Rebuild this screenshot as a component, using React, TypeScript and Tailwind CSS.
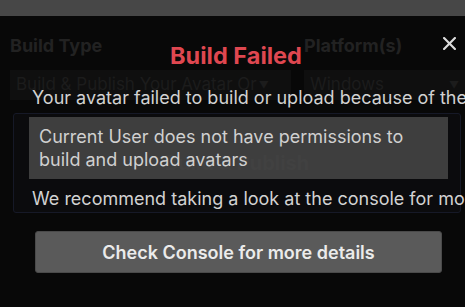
import React from "react";

const Caret = () => <span className="text-[10px] leading-none">▼</span>;

const App = () => {
  return (
    <div className="w-[465px] h-[307px] overflow-hidden bg-[#080808] font-['Inter','Noto_Sans',sans-serif] flex flex-col">
      <div className="h-[16px] shrink-0 bg-[#474747]" />

      <div className="relative flex-1">
        {/* panel under the dialog, dimmed */}
        <div className="flex flex-col pt-[19px]">
          <div className="flex text-[18px] leading-[22px] font-bold text-[#222222]">
            <div className="w-[304px] pl-[10px]">Build Type</div>
            <div>Platform(s)</div>
          </div>
          <div className="flex mt-[13px] h-[30px] text-[17px] text-[#1c1c1c]">
            <div className="w-[281px] ml-[10px] bg-[#0f0f0f] flex items-center gap-[2px] pl-[6px] whitespace-nowrap overflow-hidden">
              <span>Build &amp; Publish Your Avatar Or</span>
              <Caret />
            </div>
            <div className="flex-1 ml-[13px] bg-[#0f0f0f] flex items-center justify-between pl-[6px] pr-[6px]">
              <span>Windows</span>
              <Caret />
            </div>
          </div>
          <div className="mt-[13px] ml-[13px] mr-[4px] h-[100px] rounded-[3px] border border-[#161927] bg-[#0b0b0d] flex items-center justify-center text-[20px] font-bold text-[#2a2a2a]">
            Build &amp; Publish
          </div>
        </div>

        {/* dialog */}
        <div className="absolute inset-0 flex flex-col">
          <div className="flex items-start">
            <div className="flex-1 mt-[26px] leading-[28px] text-center pl-[39px] text-[23.5px] font-bold text-[#df4750]">Build Failed</div>
            <button className="mt-[11px] w-[32px] h-[32px] flex items-center justify-center text-[#dcdcdc]">
              <svg width="13" height="13" viewBox="0 0 12 12" fill="none" stroke="currentColor" strokeWidth="2" strokeLinecap="round">
                <path d="M1 1L11 11M11 1L1 11" />
              </svg>
            </button>
          </div>
          <div className="mt-[16px] pl-[32px] text-[18px] leading-[24px] text-[#d2d2d2] whitespace-nowrap">
            Your avatar failed to build or upload because of the following error:
          </div>
          <div className="mt-[7px] ml-[29px] w-[419px] h-[62px] bg-[#444444]/90 px-[10px] pt-[8px] text-[18px] leading-[23px] text-[#d0d0d0]">
            Current User does not have permissions to
            <br />
            build and upload avatars
          </div>
          <div className="mt-[8px] pl-[32px] text-[18px] leading-[24px] text-[#d2d2d2] whitespace-nowrap">
            We recommend taking a look at the console for more details.
          </div>
          <button className="mt-[20px] ml-[35px] w-[407px] h-[42px] rounded-[3px] border border-[#4a4a4a] bg-[#5a5a5a] text-[18px] font-semibold text-[#ebebeb]">
            Check Console for more details
          </button>
        </div>
      </div>
    </div>
  );
};

export default App;
